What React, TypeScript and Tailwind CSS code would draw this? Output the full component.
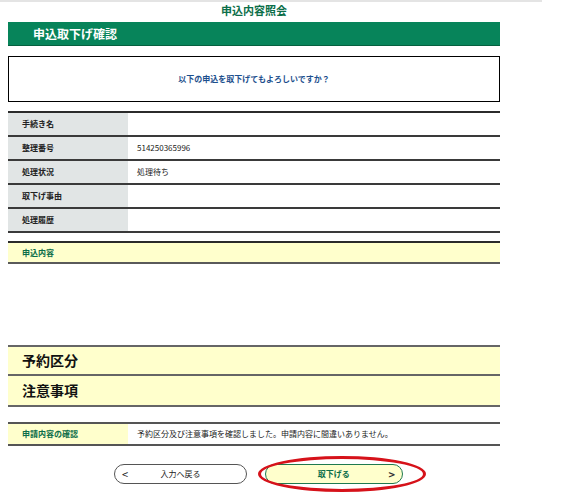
import React from "react";

const jp = { fontFamily: '"Noto Sans CJK JP", "Noto Sans", sans-serif' };

type Row = { label: string; value?: string };

const rows: Row[] = [
  { label: "手続き名" },
  { label: "整理番号", value: "514250365996" },
  { label: "処理状況", value: "処理待ち" },
  { label: "取下げ事由" },
  { label: "処理履歴" },
];

export default function App() {
  return (
    <div className="relative h-[496px] w-[567px] overflow-hidden bg-white" style={jp}>
      {/* top rule */}
      <div className="h-[2px] w-[542px] bg-[#e4e4e4]" />

      <div className="ml-2 w-[492px]">
        <h1 className="mt-px text-center text-[11px] font-bold leading-[14px] text-[#0b6e49]">
          申込内容照会
        </h1>

        <div className="mt-[5px] flex h-[24px] items-center border-b border-[#05603f] bg-[#07845a] pl-[25px] text-[12px] font-bold text-white">
          申込取下げ確認
        </div>

        <div className="mt-[10px] flex h-[46px] items-center justify-center border border-black text-[8px] font-bold text-[#1d4f8d]">
          以下の申込を取下げてもよろしいですか？
        </div>

        <div className="mt-[9px] border-t-2 border-[#2b2b2b]">
          {rows.map((r) => (
            <div key={r.label} className="flex h-[24px] border-b-2 border-[#3a3a3a]">
              <div className="flex w-[120px] items-center bg-[#e1e5e5] pl-[14px] text-[8px] font-bold text-[#222]">
                {r.label}
              </div>
              <div className="flex flex-1 items-center pl-[9px] text-[8px] text-[#222]">{r.value}</div>
            </div>
          ))}
        </div>

        <div className="mt-[8px] flex h-[23px] items-center border-t-2 border-b-2 border-t-[#2b2b2b] border-b-[#5a5a5a] bg-[#ffffcc] pl-[14px] text-[8px] font-bold text-[#0b6e49]">
          申込内容
        </div>

        <div className="h-[81px]" />

        <div className="flex h-[31px] items-center border-t-2 border-b-2 border-[#666] bg-[#ffffcc] pl-[14px] text-[14px] font-bold text-[#111]">
          予約区分
        </div>
        <div className="flex h-[31px] items-center border-b-2 border-[#666] bg-[#ffffcc] pl-[14px] text-[14px] font-bold text-[#111]">
          注意事項
        </div>

        <div className="mt-[15px] flex h-[24px] border-t-2 border-b-2 border-[#555]">
          <div className="flex w-[120px] items-center bg-[#ffffcc] pl-[14px] text-[8px] font-bold text-[#0b6e49]">
            申請内容の確認
          </div>
          <div className="flex flex-1 items-center pl-[9px] text-[8px] text-[#222]">
            予約区分及び注意事項を確認しました。申請内容に間違いありません。
          </div>
        </div>

        <div className="mt-[18px] flex items-center">
          <button className="ml-[106px] flex h-[20px] w-[133px] items-center rounded-full border border-[#555] bg-white px-[7px] text-[8px] text-[#222]">
            <span className="text-[11px] leading-none">&lt;</span>
            <span className="flex-1 text-center">入力へ戻る</span>
            <span className="w-[6px]" />
          </button>
          <div className="relative ml-[18px]">
            <button className="flex h-[20px] w-[138px] items-center rounded-full border border-[#1f7a4f] bg-[#ffffcc] px-[7px] text-[8px] font-bold text-[#0b6e49]">
              <span className="w-[6px]" />
              <span className="flex-1 text-center">取下げる</span>
              <span className="text-[11px] leading-none text-[#333]">&gt;</span>
            </button>
            <div className="pointer-events-none absolute -left-[7px] -top-[8px] h-[36px] w-[168px] rounded-[50%] border-[3px] border-[#d6121a]" />
          </div>
        </div>
      </div>
    </div>
  );
}
